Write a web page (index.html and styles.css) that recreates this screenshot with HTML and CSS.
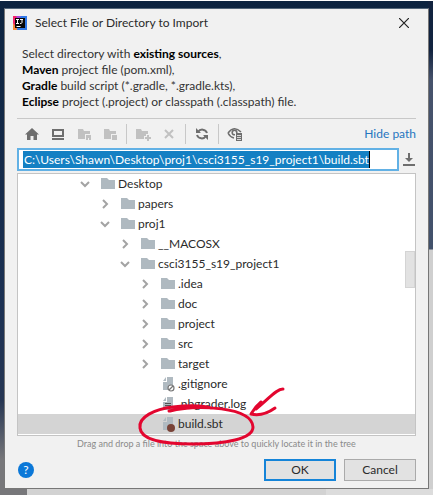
FILE: index.html
```
<!DOCTYPE html>
<html lang="en">
<head>
<meta charset="utf-8">
<title>Select File or Directory to Import</title>
<link rel="stylesheet" href="styles.css">
</head>
<body>
<svg class="defs" aria-hidden="true">
  <symbol id="folder" viewBox="0 0 14 12"><path d="M0 0h6l2 2h6v9H0z" fill="currentColor"/></symbol>
  <symbol id="file" viewBox="0 0 14 16"><path d="M6 1h6v13H2V6h4z" fill="#b0bac1"/><path d="M2 5l3-4v4z" fill="#b0bac1"/></symbol>
  <symbol id="right" viewBox="0 0 10 10"><path d="M3 1l4 4-4 4" fill="none" stroke="#a3a3a3" stroke-width="2"/></symbol>
  <symbol id="down" viewBox="0 0 10 10"><path d="M1 3l4 4 4-4" fill="none" stroke="#a3a3a3" stroke-width="2"/></symbol>
</svg>
<main class="dialog">
  <header class="titlebar">
    <svg class="logo" viewBox="0 0 14 14" aria-hidden="true"><path d="M0 0h7L4 14H0z" fill="#f3246a"/><path d="M0 7l5 7H0z" fill="#f98a3c"/><path d="M6 0h8v14H4z" fill="#2f78e8"/><path d="M3 0h5l-3 4z" fill="#a943d8"/><path d="M2 2h10v10H2z" fill="#080808"/><path d="M3 3.500h3M4.500 3.500v4M3 7.500h3M7 3.500h3M9 3.500v3q0 1-2 1M3.500 10.500h4" fill="none" stroke="#fff"/></svg>
    <h1>Select File or Directory to Import</h1>
    <button class="close" aria-label="Close"><svg viewBox="0 0 10 10"><path d="M0 0l10 10M10 0L0 10" stroke="#222" stroke-width="1.200"/></svg></button>
  </header>
  <div class="content">
    <p class="intro">Select directory with <b>existing sources</b>,<br><b>Maven</b> project file (pom.xml),<br><b>Gradle</b> build script (*.gradle, *.gradle.kts),<br><b>Eclipse</b> project (.project) or classpath (.classpath) file.</p>
    <div class="toolbar">
      <button aria-label="Home"><svg viewBox="0 0 16 16"><path d="M8 2l7 6.500h-2V14H9.500v-4h-3v4H3V8.500H1z"/></svg></button>
      <button aria-label="Desktop"><svg viewBox="0 0 16 16"><path d="M2 3h12v8H2zM4 5v4h8V5zM2 12h12v2H2z" fill-rule="evenodd"/></svg></button>
      <button disabled aria-label="Project directory"><svg viewBox="0 0 16 16"><path d="M2 3h5l1 2h6v3H9v5H2zM10 9h5v5h-2v-2h-1v2h-2z"/></svg></button>
      <button disabled aria-label="Module directory"><svg viewBox="0 0 16 16"><path d="M2 3h5l1 2h6v3H9v5H2zM10 9h5v5h-5z"/></svg></button>
      <span class="rule"></span>
      <button disabled aria-label="New folder"><svg viewBox="0 0 16 16"><path d="M1 3h5l1 2h6v3h-2v2H9v3H1zM12 9h2v2h2v2h-2v2h-2v-2h-2v-2h2z"/></svg></button>
      <button disabled aria-label="Delete"><svg viewBox="0 0 16 16"><path d="M4 4l8 8M12 4l-8 8" fill="none" stroke="currentColor" stroke-width="2"/></svg></button>
      <span class="rule"></span>
      <button aria-label="Refresh"><svg viewBox="0 0 16 16"><path d="M4 6a5 5 0 0 1 9 1M12 10a5 5 0 0 1-9-1" fill="none" stroke="currentColor" stroke-width="2"/><path d="M2 2v5h5zM14 14V9H9z"/></svg></button>
      <span class="rule"></span>
      <button aria-label="Show hidden files"><svg viewBox="0 0 16 16"><path d="M1 7q6-8 13-1M1 7q2 4 6 5" fill="none" stroke="currentColor" stroke-width="1.600"/><circle cx="7.500" cy="6.500" r="2.300" fill="none" stroke="currentColor" stroke-width="1.600"/><path d="M8 7h8v9H8z" fill="#f1f1f1"/><path d="M9 7h6v8H9z"/><path d="M10 9.500h4M10 11.500h4M10 13.500h4" stroke="#f1f1f1" stroke-width=".8"/></svg></button>
      <a class="hide" href="#path">Hide path</a>
    </div>
    <div class="pathrow">
      <div class="field"><input id="path" aria-label="Path" value="C:\Users\Shawn\Desktop\proj1\csci3155_s19_project1\build.sbt"></div>
      <button aria-label="Recent paths"><svg viewBox="0 0 12 13"><path d="M5 0h2v5h3L6 9 2 5h3zM0 11h12v2H0z"/></svg></button>
    </div>
    <div class="treebox">
      <ul class="tree">
        <li><svg class="arrow"><use href="#down"/></svg><svg class="folder"><use href="#folder"/></svg><span>Desktop</span></li>
        <li class="d1"><svg class="arrow"><use href="#right"/></svg><svg class="folder"><use href="#folder"/></svg><span>papers</span></li>
        <li class="d1"><svg class="arrow"><use href="#down"/></svg><svg class="folder"><use href="#folder"/></svg><span>proj1</span></li>
        <li class="d2"><svg class="arrow"><use href="#right"/></svg><svg class="folder"><use href="#folder"/></svg><span>__MACOSX</span></li>
        <li class="d2"><svg class="arrow"><use href="#down"/></svg><svg class="folder"><use href="#folder"/></svg><span>csci3155_s19_project1</span></li>
        <li class="d3"><svg class="arrow"><use href="#right"/></svg><svg class="folder"><use href="#folder"/></svg><span>.idea</span></li>
        <li class="d3"><svg class="arrow"><use href="#right"/></svg><svg class="folder"><use href="#folder"/></svg><span>doc</span></li>
        <li class="d3"><svg class="arrow"><use href="#right"/></svg><svg class="folder"><use href="#folder"/></svg><span>project</span></li>
        <li class="d3"><svg class="arrow"><use href="#right"/></svg><svg class="folder"><use href="#folder"/></svg><span>src</span></li>
        <li class="d3"><svg class="arrow"><use href="#right"/></svg><svg class="folder"><use href="#folder"/></svg><span>target</span></li>
        <li class="d3"><span class="arrow"></span><svg class="file" viewBox="0 0 14 16"><use href="#file"/><circle cx="10" cy="12" r="3" fill="#fff" stroke="#777" stroke-width="1.200"/><path d="M8 14l4-4" stroke="#777" stroke-width="1.200"/></svg><span>.gitignore</span></li>
        <li class="d3"><span class="arrow"></span><svg class="file" viewBox="0 0 14 16"><use href="#file"/><path d="M4 7.500h6M4 9.500h6M4 11.500h4" stroke="#555"/></svg><span>.nbgrader.log</span></li>
        <li class="d3 selected"><span class="arrow"></span><svg class="file" viewBox="0 0 14 16"><use href="#file"/><circle cx="10" cy="12" r="4" fill="#784338"/></svg><span>build.sbt</span>
          <svg class="mark" viewBox="0 0 152 62" aria-hidden="true"><path d="M34 26C63 19 117 22 118 42C118 54 90 59 58 59C26 59 6 54 5 43C3 32 20 24 38 22Q62 19 76 23M35 26Q46 23 55 23"/><path d="M148 4C141 4 135 13 121 24L126 17Q120 22 116 29C124 31 133 28 140 23"/></svg>
        </li>
      </ul>
      <span class="thumb"></span>
    </div>
    <p class="hint">Drag and drop a file into the space above to quickly locate it in the tree</p>
    <footer>
      <button class="help" aria-label="Help">?</button>
      <button class="action primary">OK</button>
      <button class="action">Cancel</button>
    </footer>
  </div>
</main>
</body>
</html>
```
FILE: styles.css
```
* { box-sizing: border-box; }
body {
  margin: 0;
  min-height: 100vh;
  padding: 8px 4px 7px;
  font: 12px/16px Lato, "Open Sans", sans-serif;
  color: #2b2b2b;
  background:
    linear-gradient(#fff, #fff) top / 100% 1px no-repeat,
    linear-gradient(90deg, #77777a 27px, #d2d2d2 27px 326px, #dcdcdc 326px) bottom / 100% 7px no-repeat,
    linear-gradient(#12233f 50px, #46526b 80px, #42516b 249px, #cfcfcf 250px) right / 5px 100% no-repeat,
    linear-gradient(#0d2440, #1c3153 300px, #263653 400px, #77777a 460px);
}
button, input { font: inherit; color: inherit; margin: 0; }
button { border: 0; padding: 0; background: none; display: block; }
svg { display: block; flex: none; }
.defs { position: absolute; width: 0; height: 0; }
.dialog {
  min-height: calc(100vh - 15px);
  background: #f1f1f1;
  border: 1px solid #777;
  border-top-color: #54677a;
}
.titlebar { display: flex; align-items: center; height: 28px; padding: 0 19px 0 8px; }
.logo { width: 14px; height: 14px; }
h1 { flex: 1; margin: 0 0 0 8px; font-size: 12px; font-weight: 400; }
.close svg { width: 10px; height: 10px; }
.content { padding: 9px 12px 0; }
.intro { margin: 0; padding: 0 0 8px 5px; color: #333; border-bottom: 1px solid #c8c8c8; }
.intro b { color: #000; }
.toolbar { display: flex; align-items: center; height: 29px; padding-left: 7px; gap: 10px; }
.toolbar button { color: #6e6e6e; }
.toolbar button:disabled { color: #c1c1c1; }
.toolbar svg { width: 16px; height: 16px; fill: currentColor; }
.rule { width: 1px; height: 20px; margin: 0 -2px; background: #c8c8c8; }
.hide { margin-left: auto; color: #2675bf; text-decoration: none; }
.pathrow { display: flex; align-items: center; gap: 3px; margin-bottom: 2px; }
.field { flex: 1; display: flex; height: 23px; padding: 1px 4px; background: #fff; border: 2px solid #62b1e5; }
.field input { field-sizing: content; min-width: 0; height: 17px; padding: 0 0 0 1px; border: 0; border-right: 1px solid #000; color: #fff; background: #1480c3; outline: 0; }
.pathrow svg { width: 12px; height: 13px; margin: 0 1px; fill: #6e6e6e; }
.treebox { position: relative; background: #fff; border: 1px solid #c4c4c4; padding-bottom: 1px; }
.tree { list-style: none; margin: 0; padding: 0; }
.tree li { display: flex; align-items: center; height: 20px; padding-left: 62px; }
.tree .d1 { padding-left: 82px; }
.tree .d2 { padding-left: 102px; }
.tree .d3 { padding-left: 122px; }
.arrow { width: 10px; height: 10px; margin-right: 11px; flex: none; }
.folder { width: 14px; height: 12px; margin-right: 3px; color: #afb9c0; }
.file { width: 14px; height: 16px; margin-right: 3px; }
.tree .selected { position: relative; background: #d4d4d4; }
.mark { position: absolute; left: 117px; top: -29px; width: 152px; height: 62px; z-index: 1; fill: none; stroke: #e3062f; stroke-width: 3; stroke-linecap: round; stroke-linejoin: round; }
.thumb { position: absolute; right: 0; top: 77px; width: 10px; height: 37px; background: #e2e2e2; border: 1px solid #d4d4d4; }
.hint { margin: 0; padding-left: 60px; font-size: 9px; color: #8a8a8a; white-space: nowrap; }
footer { display: flex; align-items: center; gap: 8px; padding: 7px 0 7px 1px; }
.help { width: 16px; height: 16px; border-radius: 50%; margin-right: auto; background: #0b78d8; color: #fff; }
.action { width: 72px; height: 22px; line-height: 16px; background: #e2e2e2; border: 1px solid #aaa; }
.primary { border: 2px solid #1584d8; }
```
